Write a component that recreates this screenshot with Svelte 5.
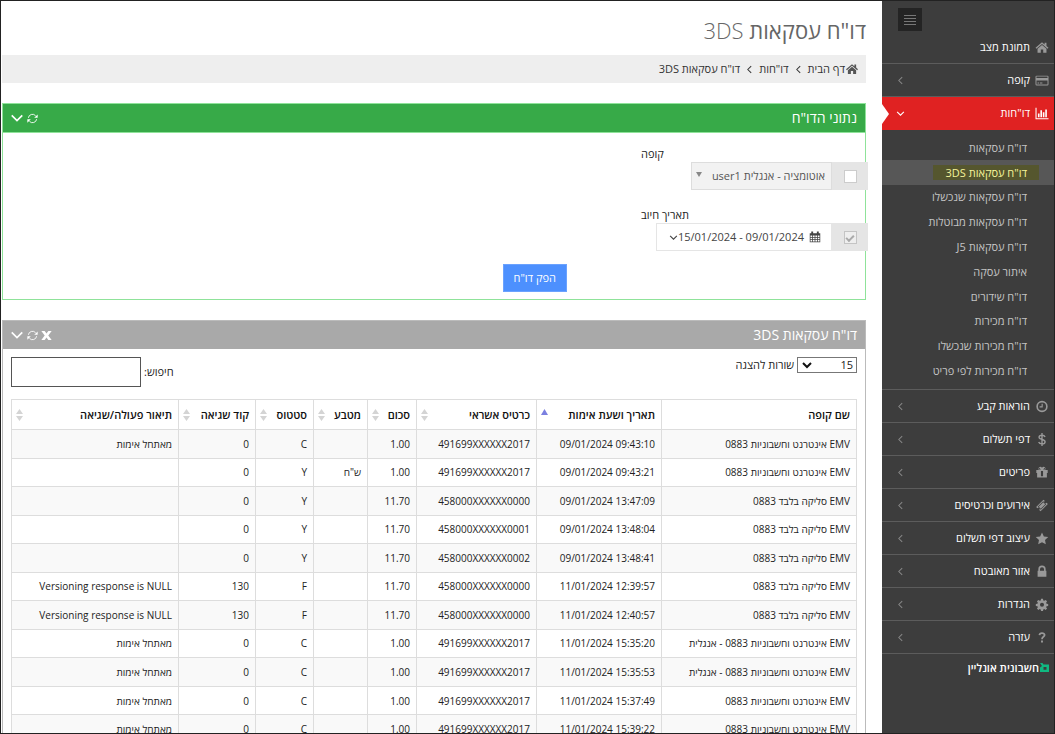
<script>
  const menuTop = [
    { label: 'תמונת מצב', icon: 'home' },
    { label: 'קופה', icon: 'card', arrow: true }
  ];
  const reports = [
    'דו"ח עסקאות', 'דו"ח עסקאות 3DS', 'דו"ח עסקאות שנכשלו', 'דו"ח עסקאות מבוטלות',
    'דו"ח עסקאות J5', 'איתור עסקה', 'דו"ח שידורים', 'דו"ח מכירות',
    'דו"ח מכירות שנכשלו', 'דו"ח מכירות לפי פריט'
  ];
  const menuBottom = [
    { label: 'הוראות קבע', icon: 'clock', arrow: true },
    { label: 'דפי תשלום', icon: 'dollar', arrow: true },
    { label: 'פריטים', icon: 'gift', arrow: true },
    { label: 'אירועים וכרטיסים', icon: 'ticket', arrow: true },
    { label: 'עיצוב דפי תשלום', icon: 'star', arrow: true },
    { label: 'אזור מאובטח', icon: 'lock', arrow: true },
    { label: 'הגדרות', icon: 'gear', arrow: true },
    { label: 'עזרה', icon: 'question', arrow: true }
  ];
  const columns = ['שם קופה', 'תאריך ושעת אימות', 'כרטיס אשראי', 'סכום', 'מטבע', 'סטטוס', 'קוד שגיאה', 'תיאור פעולה/שגיאה'];
  const net = 'EMV אינטרנט וחשבוניות 0883';
  const clear = 'EMV סליקה בלבד 0883';
  const init = 'מאתחל אימות';
  const nul = 'Versioning response is NULL';
  const rows = [
    [net, '09/01/2024 09:43:10', '491699XXXXXX2017', '1.00', '', 'C', '0', init],
    [net, '09/01/2024 09:43:21', '491699XXXXXX2017', '1.00', 'ש"ח', 'Y', '0', ''],
    [clear, '09/01/2024 13:47:09', '458000XXXXXX0000', '11.70', '', 'Y', '0', ''],
    [clear, '09/01/2024 13:48:04', '458000XXXXXX0001', '11.70', '', 'Y', '0', ''],
    [clear, '09/01/2024 13:48:41', '458000XXXXXX0002', '11.70', '', 'Y', '0', ''],
    [clear, '11/01/2024 12:39:57', '458000XXXXXX0000', '11.70', '', 'F', '130', nul],
    [clear, '11/01/2024 12:40:57', '458000XXXXXX0000', '11.70', '', 'F', '130', nul],
    [net + ' - אנגלית', '11/01/2024 15:35:20', '491699XXXXXX2017', '1.00', '', 'C', '0', init],
    [net + ' - אנגלית', '11/01/2024 15:35:53', '491699XXXXXX2017', '1.00', '', 'C', '0', init],
    [net, '11/01/2024 15:37:49', '491699XXXXXX2017', '1.00', '', 'C', '0', init],
    [net, '11/01/2024 15:39:22', '491699XXXXXX2017', '1.00', '', 'C', '0', init]
  ];
</script>

{#snippet icon(name)}
  <svg class="icon" viewBox="0 0 16 16" aria-hidden="true" fill="currentColor">
    {#if name === 'home'}
      <path d="M8 1.500 0 8.200l1.200 1.300L8 3.800l6.800 5.700L16 8.200l-2.500-2.100V2h-2.300v2.200zM8 5 2.500 9.600V14.500h4v-4h3v4h4V9.600z" />
    {:else if name === 'card'}
      <path fill-rule="evenodd" d="M1.500 2h13A1.5 1.5 0 0 1 16 3.500v9a1.5 1.5 0 0 1-1.500 1.500h-13A1.500 1.500 0 0 1 0 12.500v-9A1.500 1.500 0 0 1 1.500 2zM1.200 3.200v1.600h13.600V3.200zM1.200 8v4.800h13.600V8zM2.500 10.500h2v1.200h-2zm3 0h3v1.200h-3z" />
    {:else if name === 'chart'}
      <path d="M0 1h1.300v12.700H16V15H0zM3 8h2v4.700H3zm3-4h2v8.700H6zm3 2.500h2v6.200H9zM12 3h2v9.700h-2z" />
    {:else if name === 'clock'}
      <path fill-rule="evenodd" d="M8 1a7 7 0 1 1 0 14A7 7 0 0 1 8 1zm0 2a5 5 0 1 0 0 10A5 5 0 0 0 8 3zM7.500 4.500h1.400v4.600H5V7.700h2.500z" />
    {:else if name === 'dollar'}
      <path d="M8 0v16M11.800 5C11.200 3.400 9.700 2.700 8 2.700c-2.200 0-3.600 1-3.600 2.600 0 3.700 7.400 1.600 7.400 5.400 0 1.800-1.600 2.700-3.800 2.700s-3.600-.9-4.100-2.400" fill="none" stroke="currentColor" stroke-width="1.700" />
    {:else if name === 'gift'}
      <path fill-rule="evenodd" d="M1 5h3.500A2.200 2.200 0 1 1 8 2.600 2.200 2.200 0 1 1 11.500 5H15v3.500h-1V14H2V8.500H1zm3.800-2.600a.9.900 0 0 0 0 1.800h1.900zm6.400 0L9.300 4.200h1.900a.9.900 0 0 0 0-1.800zM6.700 6.200v6.300h2.600V6.200z" />
    {:else if name === 'ticket'}
      <path fill-rule="evenodd" d="m9.800.8 1.500 1.500a1.600 1.600 0 0 0 2.300 2.300l1.600 1.600-9 9-1.600-1.600a1.600 1.600 0 0 0-2.300-2.300L.8 9.800zM9.500 2.800 2.800 9.500l3.700 3.700 6.700-6.700zm0 1.200 2.500 2.500L6.500 12 4 9.500z" />
    {:else if name === 'star'}
      <path d="m8 .5 2.300 4.900 5.400.7-4 3.700 1 5.400L8 12.600l-4.700 2.600 1-5.400-4-3.700 5.400-.7z" />
    {:else if name === 'lock'}
      <path fill-rule="evenodd" d="M3.500 7V5.200a4.500 4.500 0 0 1 9 0V7h.9v7.500H2.600V7zm2 0h5V5.200a2.500 2.500 0 0 0-5 0z" />
    {:else if name === 'gear'}
      <path fill-rule="evenodd" d="M6.800 1h2.400l.4 2 1.200.5 1.700-1.100 1.700 1.700-1.100 1.700.5 1.200 2 .3v2.500l-2 .3-.5 1.200 1.100 1.700-1.700 1.700-1.700-1.100-1.200.5-.4 1.900H6.800l-.4-1.900-1.200-.5-1.700 1.100L1.800 13l1.100-1.700-.5-1.200-2-.3V7.300l2-.3.5-1.200-1.100-1.700 1.700-1.700 1.700 1.100L6.400 3zM8 5.800a2.500 2.500 0 1 0 0 5 2.500 2.500 0 0 0 0-5z" />
    {:else if name === 'question'}
      <path d="M4.800 5.200C5 3.500 6.200 2.500 8 2.500s3.200 1 3.200 2.500C11.200 7.400 8 7 8 10" fill="none" stroke="currentColor" stroke-width="2.200" /><path d="M6.800 11.700h2.400V14H6.800z" />
    {:else if name === 'left'}
      <path d="M11 2 5 8l6 6" fill="none" stroke="currentColor" stroke-width="1.800" />
    {:else if name === 'down'}
      <path d="m2 5 6 6 6-6" fill="none" stroke="currentColor" stroke-width="1.900" />
    {:else if name === 'refresh'}
      <path d="M2 7a6 6 0 0 1 10.500-3M14 9a6 6 0 0 1-10.500 3" fill="none" stroke="currentColor" stroke-width="1.300" /><path d="M15.500 2v5h-5zM.5 14V9h5z" />
    {:else if name === 'close'}
      <path d="M.5 1.500h4.800L8 5l2.700-3.500h4.800L10.600 8l4.900 6.500h-4.800L8 11l-2.700 3.500H.5L5.400 8z" />
    {:else if name === 'calendar'}
      <path fill-rule="evenodd" d="M1 3h2V.8h2.500V3h5V.8H13V3h2v12H1zm1 3v2h2.300V6zm3.300 0v2h2.200V6zm3.200 0v2h2.200V6zm3.200 0v2H14V6zM2 9v2h2.300V9zm3.300 0v2h2.200V9zm3.200 0v2h2.200V9zm3.200 0v2H14V9zM2 12v2h2.300v-2zm3.300 0v2h2.200v-2zm3.200 0v2h2.200v-2zm3.200 0v2H14v-2z" />
    {/if}
  </svg>
{/snippet}

{#snippet item(entry)}
  <li class="item">
    <a href="#top">
      {@render icon(entry.icon)}
      <span>{entry.label}</span>
      {#if entry.arrow}<i class="arrow">{@render icon('left')}</i>{/if}
    </a>
  </li>
{/snippet}

<div class="page" dir="rtl">
  <nav class="sidebar" aria-label="תפריט">
    <button class="toggle" aria-label="תפריט">
      <svg viewBox="0 0 12 12" width="12" height="12"><path d="M0 1.500h12M0 4.500h12M0 7.500h12M0 10.500h12" stroke="#777" /></svg>
    </button>
    <ul>
      {#each menuTop as entry}{@render item(entry)}{/each}
      <li class="item open">
        <a href="#top">
          {@render icon('chart')}
          <span>דו"חות</span>
          <i class="arrow">{@render icon('down')}</i>
        </a>
      </li>
      <li class="sub">
        <ul>
          {#each reports as label, i}
            <li class:current={i === 1}><a href="#top"><span>{label}</span></a></li>
          {/each}
        </ul>
      </li>
      {#each menuBottom as entry}{@render item(entry)}{/each}
      <li class="item invoice">
        <a href="#top">
          <svg viewBox="0 0 9 9" width="9" height="9" fill="#10b981"><path fill-rule="evenodd" d="M0 0h2.500l1 1.500H9V9H0V4.500l2-1.500zM3.500 4v2.800h3V4z" /></svg>
          <span>חשבונית אונליין</span>
        </a>
      </li>
    </ul>
  </nav>

  <main>
    <h1>דו"ח עסקאות <span>3DS</span></h1>
    <div class="crumbs">
      {@render icon('home')}
      <a href="#top">דף הבית</a>
      <i>{@render icon('left')}</i>
      <a href="#top">דו"חות</a>
      <i>{@render icon('left')}</i>
      <a href="#top">דו"ח עסקאות 3DS</a>
    </div>

    <section class="panel green">
      <header>
        <h2>נתוני הדו"ח</h2>
        <div class="tools">
          <button aria-label="רענון">{@render icon('refresh')}</button>
          <button aria-label="כיווץ" class="wide">{@render icon('down')}</button>
        </div>
      </header>
      <form onsubmit={(e) => e.preventDefault()}>
        <div class="group">
          <label for="till">קופה</label>
          <div class="field">
            <span class="addon"><input type="checkbox" aria-label="קופה" /></span>
            <div class="till">
              <select id="till"><option>אוטומציה - אנגלית user1</option></select>
              <svg viewBox="0 0 6 5" width="6" height="5"><path d="M0 0h6L3 5z" fill="#888" /></svg>
            </div>
          </div>
        </div>
        <div class="group">
          <label for="range">תאריך חיוב</label>
          <div class="field">
            <span class="addon"><input type="checkbox" aria-label="תאריך חיוב" checked disabled /></span>
            <button type="button" id="range" class="range">
              {@render icon('calendar')}
              <span>09/01/2024 - 15/01/2024</span>
              <i>{@render icon('down')}</i>
            </button>
          </div>
        </div>
        <button class="submit">הפק דו"ח</button>
      </form>
    </section>

    <section class="panel gray">
      <header>
        <h2>דו"ח עסקאות 3DS</h2>
        <div class="tools">
          <button aria-label="סגירה">{@render icon('close')}</button>
          <button aria-label="רענון">{@render icon('refresh')}</button>
          <button aria-label="כיווץ" class="wide">{@render icon('down')}</button>
        </div>
      </header>
      <div class="filters">
        <label class="length">
          <span class="count">
            <select><option>15</option></select>
            <svg viewBox="0 0 10 7" width="10" height="7"><path d="m1 1 4 4 4-4" fill="none" stroke="#111" stroke-width="2" /></svg>
          </span>
          שורות להצגה
        </label>
        <label class="search">חיפוש: <input type="text" /></label>
      </div>
      <table>
        <thead>
          <tr>
            {#each columns as name, i}
              <th>
                <div>
                  {name}
                  {#if i === 1}
                    <svg viewBox="0 0 7 12" width="7" height="12"><path d="M0 6h7L3.500 0z" fill="#7b80e0" /></svg>
                  {:else if i > 1}
                    <svg viewBox="0 0 7 12" width="7" height="12"><path d="M0 5h7L3.500 0zM0 7h7l-3.500 5z" fill="#d4d4d4" /></svg>
                  {/if}
                </div>
              </th>
            {/each}
          </tr>
        </thead>
        <tbody>
          {#each rows as row}
            <tr>
              {#each row as cell, i}
                <td><span dir={i === 0 || i === 4 ? 'rtl' : 'ltr'}>{cell}</span></td>
              {/each}
            </tr>
          {/each}
        </tbody>
      </table>
    </section>
  </main>
</div>

<style>
  :global(body) { margin: 0; }
  .page, .page * { box-sizing: border-box; }
  .page {
    display: flex;
    height: 100vh;
    overflow: hidden;
    border: 1px solid #222;
    background: #fff;
    color: #222;
    font: 11px/16px "Open Sans", "Noto Sans", sans-serif;
  }
  button, input, select { font: inherit; color: inherit; margin: 0; }
  button { border: 0; padding: 0; background: none; cursor: pointer; }
  a { color: inherit; text-decoration: none; }
  ul { list-style: none; margin: 0; padding: 0; }
  i { display: flex; font-style: normal; }
  .icon { width: 12px; height: 12px; flex: none; }

  .sidebar { flex: none; width: 172px; background: #3d3d3d; color: #fff; }
  .toggle {
    display: flex;
    align-items: center;
    justify-content: center;
    width: 24px;
    height: 23px;
    margin: 7px auto 0 16px;
    background: #242424;
  }
  .item { border-bottom: 1px solid #5c5c5c; }
  .item a { display: flex; align-items: center; height: 32px; padding: 0 5px 0 14px; gap: 5px; font-weight: 500; }
  .item .icon { width: 14px; height: 13px; color: #999; }
  .arrow { margin-right: auto; }
  .item .arrow .icon { width: 9px; height: 9px; color: #888; }
  .open { position: relative; background: #e02222; border-color: #e02222; }
  .item.open a { font-weight: 400; }
  .item.open .icon { color: #fff; }
  .open::after {
    content: "";
    position: absolute;
    left: 0;
    top: 7px;
    border: solid transparent;
    border-width: 10px 0 10px 7px;
    border-left-color: #fff;
  }
  .sub { padding: 5px 0 6px; border-bottom: 1px solid #5c5c5c; color: #c4c4c4; }
  .sub ul { display: grid; grid-auto-rows: 1fr; height: 248px; }
  .sub li { display: flex; align-items: center; padding-right: 15px; }
  .sub a { padding: 0 12px; line-height: 15px; }
  .current { background: #575757; color: #f4f49a; }
  .current a { background: #55562e; }
  .item.invoice { border: 0; }
  .item.invoice a { height: 27px; gap: 1px; font-weight: 600; }

  main { flex: 1; min-width: 0; padding: 12px 16px 0 1px; direction: ltr; }
  main > * { direction: rtl; }
  h1 { margin: 0; font-size: 22px; line-height: 34px; font-weight: 400; color: #666; }
  h1 span { font-weight: 300; }
  .crumbs {
    display: flex;
    align-items: center;
    gap: 5px;
    height: 28px;
    margin: 8px 0 20px;
    padding: 0 8px;
    background: #eee;
    color: #333;
  }
  .crumbs > .icon { margin-left: -4px; color: #555; }
  .crumbs i .icon { width: 9px; height: 9px; }
  .panel { margin-bottom: 20px; border: 1px solid; }
  .green { border-color: #8fe39a; }
  .gray { border-color: #bbb; }
  .panel header { display: flex; align-items: center; justify-content: space-between; height: 28px; padding: 0 8px; color: #fff; }
  .green header { height: 29px; background: #37aa48; border-bottom: 1px solid #8fe39a; }
  .gray header { background: #a9a9a9; }
  h2 { margin: 0; font-size: 14px; line-height: 20px; font-weight: 400; }
  .tools { display: flex; align-items: center; gap: 3px; margin-left: -1px; }
  .tools button { display: flex; }
  .tools .icon { width: 11px; height: 11px; }
  .tools .wide .icon { width: 14px; height: 14px; }

  form { padding: 13px 0 7px; }
  .group { display: flex; flex-direction: column; align-items: flex-start; width: 227px; margin: 0 -3px 17px 0; }
  .group label { align-self: flex-end; }
  .field { display: flex; height: 28px; }
  .addon { display: flex; align-items: center; justify-content: center; width: 36px; background: #e5e5e5; }
  .addon input {
    display: grid;
    place-items: center;
    appearance: none;
    width: 13px;
    height: 13px;
    border: 1px solid #ccc;
    background: #fff;
  }
  .addon input:checked { background: #eee; border-color: #c4c4c4; }
  .addon input:checked::before {
    content: "";
    width: 6px;
    height: 3px;
    border: solid #aaa;
    border-width: 0 0 2px 2px;
    transform: rotate(-45deg);
  }
  .till { display: flex; position: relative; width: 141px; }
  select { appearance: none; border-radius: 0; }
  .till select { width: 100%; padding: 0 6px; border: 1px solid #ddd; background: #f2f2f2; color: #555; }
  .till svg { position: absolute; left: 5px; top: 10px; }
  .range {
    display: flex;
    align-items: center;
    justify-content: flex-start;
    width: 176px;
    padding: 0 10px;
    border: 1px solid #e5e5e5;
    background: #fff;
    color: #444;
  }
  .range span { margin-right: 5px; }
  .range i .icon { width: 9px; height: 9px; }
  .submit {
    display: block;
    width: 64px;
    height: 28px;
    margin: -4px 34.6% 0 0;
    background: #4d90fe;
    border: 1px solid #6ba2fe;
    color: #fff;
  }

  .filters { display: flex; justify-content: space-between; align-items: flex-start; padding: 8px 8px 12px; }
  .filters label { display: flex; align-items: center; gap: 3px; }
  .count { display: flex; position: relative; }
  .count select { width: 60px; height: 16px; padding: 0 3px; border: 1px solid #777; background: #fff; line-height: 14px; }
  .count svg { position: absolute; left: 5px; top: 5px; }
  .search input { width: 130px; height: 30px; padding: 0 6px; border: 1px solid #555; }
  table {
    width: calc(100% - 16px);
    height: 345px;
    margin: 0 8px;
    table-layout: fixed;
    border-collapse: collapse;
  }
  th, td { padding: 0 6px; border: 1px solid #ddd; text-align: right; white-space: nowrap; }
  td { font-size: 10px; }
  th { height: 30px; color: #111; font-weight: 600; }
  th:nth-child(2) { width: 125px; }
  th:nth-child(3) { width: 120px; }
  th:nth-child(4) { width: 49px; }
  th:nth-child(5) { width: 54px; }
  th:nth-child(6) { width: 58px; }
  th:nth-child(7) { width: 77px; }
  th:nth-child(8) { width: 167px; }
  th div { display: flex; align-items: center; justify-content: space-between; margin-left: -2px; }
  tbody tr:nth-child(odd) { background: #f9f9f9; }
</style>
